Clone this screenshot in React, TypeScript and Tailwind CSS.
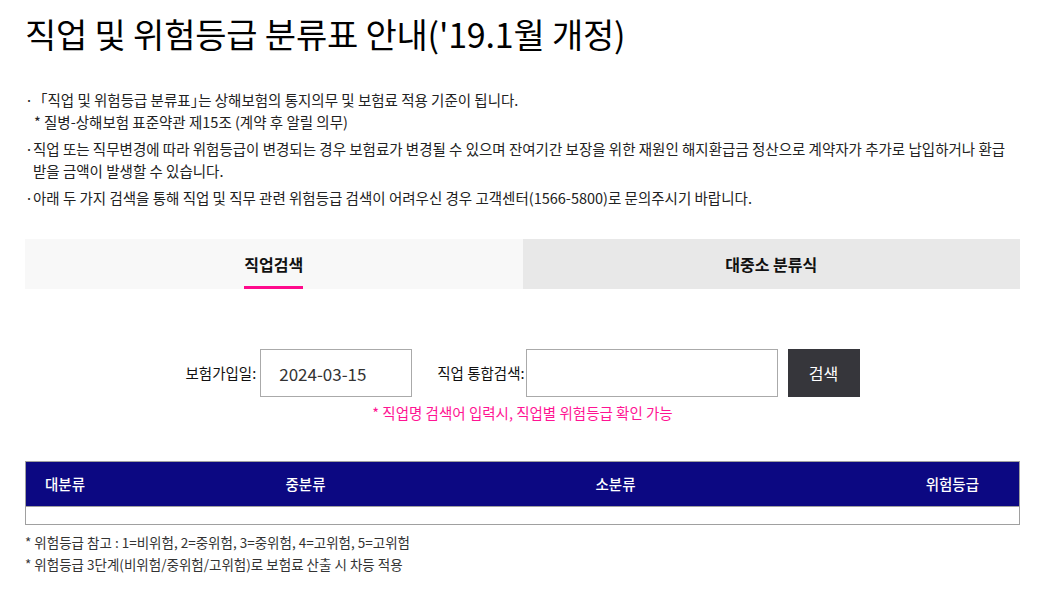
import { useState } from 'react';

const FONT = { fontFamily: '"Noto Sans CJK KR", "Noto Sans", sans-serif' };

type Tab = 'job' | 'class';

const notices = [
  {
    text: (
      <>
        「직업 및 위험등급 분류표<span className="tracking-[-7px]">」</span>는 상해보험의 통지의무 및 보험료 적용 기준이 됩니다.
      </>
    ),
    key: 'n1',
    sub: '* 질병-상해보험 표준약관 제15조 (계약 후 알릴 의무)',
  },
  {
    text: '직업 또는 직무변경에 따라 위험등급이 변경되는 경우 보험료가 변경될 수 있으며 잔여기간 보장을 위한 재원인 해지환급금 정산으로 계약자가 추가로 납입하거나 환급 받을 금액이 발생할 수 있습니다.',
    key: 'n2',
  },
  {
    text: '아래 두 가지 검색을 통해 직업 및 직무 관련 위험등급 검색이 어려우신 경우 고객센터(1566-5800)로 문의주시기 바랍니다.',
    key: 'n3',
  },
];

export default function App() {
  const [activeTab, setActiveTab] = useState<Tab>('job');
  const [joinDate, setJoinDate] = useState('2024-03-15');
  const [keyword, setKeyword] = useState('');

  return (
    <main className="min-h-screen bg-white text-[#111]" style={FONT}>
      <div className="pl-[25px] pr-[23px] pt-[10px]">
        <h1 className="text-[34px] leading-[48px] font-normal tracking-[-0.2px] text-black">
          직업 및 위험등급 분류표 안내('19.1월 개정)
        </h1>

        <ul className="mt-[31px] space-y-[5px] text-[14.5px] leading-[22px] text-[#222]">
          {notices.map((item) => (
            <li key={item.key} className="flex">
              <span className="w-[8px] shrink-0">·</span>
              <div className="pr-[6px]">
                <p>{item.text}</p>
                {item.sub ? <p className="pl-[1px]">{item.sub}</p> : null}
              </div>
            </li>
          ))}
        </ul>

        <div className="mt-[30px] grid grid-cols-2">
          <button
            type="button"
            onClick={() => setActiveTab('job')}
            className={`flex h-[50px] items-center justify-center text-[16px] font-bold ${activeTab === 'job' ? 'bg-[#f8f8f8]' : 'bg-[#e8e8e8]'}`}
          >
            <span className="relative flex h-full items-center">
              직업검색
              {activeTab === 'job' ? <span className="absolute bottom-0 left-0 right-0 h-[3px] bg-[#ff0a8c]" /> : null}
            </span>
          </button>
          <button
            type="button"
            onClick={() => setActiveTab('class')}
            className={`flex h-[50px] items-center justify-center text-[16px] font-bold ${activeTab === 'class' ? 'bg-[#f8f8f8]' : 'bg-[#e8e8e8]'}`}
          >
            <span className="relative flex h-full items-center">
              대중소 분류식
              {activeTab === 'class' ? <span className="absolute bottom-0 left-0 right-0 h-[3px] bg-[#ff0a8c]" /> : null}
            </span>
          </button>
        </div>

        <div className="mt-[60px] flex items-center justify-center text-[14.5px]">
          <label htmlFor="joinDate" className="mr-[4px]">보험가입일:</label>
          <input
            id="joinDate"
            value={joinDate}
            onChange={(event) => setJoinDate(event.target.value)}
            className="h-[48px] w-[152px] border border-[#aaa] px-[18px] text-[17px] text-[#333] outline-none"
          />
          <label htmlFor="keyword" className="ml-[25px] mr-[1px]">직업 통합검색:</label>
          <input
            id="keyword"
            value={keyword}
            onChange={(event) => setKeyword(event.target.value)}
            className="h-[48px] w-[252px] border border-[#aaa] px-[10px] text-[16px] outline-none"
          />
          <button type="button" className="ml-[10px] h-[48px] w-[72px] bg-[#36363b] text-[16px] text-white">
            검색
          </button>
        </div>
        <p className="mt-[5px] text-center text-[14.5px] text-[#ff1493]">* 직업명 검색어 입력시, 직업별 위험등급 확인 가능</p>

        <table className="mt-[37px] w-full border-collapse border border-[#a0a0a0] text-[14.5px]">
          <thead>
            <tr className="h-[45px] bg-[#0c0882] text-white">
              <th className="w-[240px] pl-[19px] text-left font-medium">대분류</th>
              <th className="w-[310px] pl-[20px] text-left font-medium">중분류</th>
              <th className="pl-[20px] text-left font-medium">소분류</th>
              <th className="w-[100px] pr-[40px] text-right font-medium">위험등급</th>
            </tr>
          </thead>
          <tbody>
            <tr className="h-[18px] border-t border-[#a0a0a0]">
              <td colSpan={4} />
            </tr>
          </tbody>
        </table>

        <ul className="mt-[7px] space-y-[1px] text-[13.5px] leading-[21px] text-[#333]">
          <li>* 위험등급 참고 : 1=비위험, 2=중위험, 3=중위험, 4=고위험, 5=고위험</li>
          <li>* 위험등급 3단계(비위험/중위험/고위험)로 보험료 산출 시 차등 적용</li>
        </ul>
      </div>
    </main>
  );
}
